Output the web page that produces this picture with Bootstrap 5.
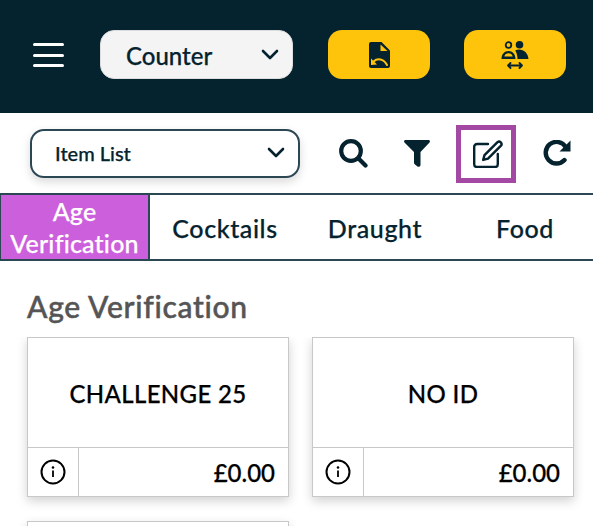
<!DOCTYPE html>
<html lang="en">

<head>
  <meta charset="UTF-8">
  <meta name="viewport" content="width=device-width, initial-scale=1.0">
  <title>Till</title>
  <link href="https://cdn.jsdelivr.net/npm/bootstrap@5.3.0/dist/css/bootstrap.min.css" rel="stylesheet">
  <style>
    html, body {
      height: 526px;
      overflow: hidden;
    }

    body {
      font-family: Lato, "Noto Sans", sans-serif;
      color: #05222f;
      background: #fff;
    }

    .top-bar {
      height: 113px;
      background: #05222f;
      padding: 30px 27px 0 33px;
    }

    .burger {
      width: 31px;
      height: 24px;
      margin-top: 13px;
      margin-right: 36px;
      padding: 0;
      background: none;
      border: 0;
    }

    .burger span {
      height: 3px;
      background: #fff;
      border-radius: 2px;
    }

    .pick {
      font-family: Lato, sans-serif;
      font-weight: 500;
      -webkit-text-stroke: .25px #05222f;
      color: #05222f;
      background-image: url("data:image/svg+xml,%3csvg xmlns='http://www.w3.org/2000/svg' viewBox='0 0 18 12'%3e%3cpath fill='none' stroke='%2305222f' stroke-width='2.6' stroke-linecap='round' stroke-linejoin='round' d='M2 2l7 7 7-7'/%3e%3c/svg%3e");
      background-size: 18px 12px;
    }

    .pick-counter {
      width: 193px;
      height: 49px;
      font-size: 24px;
      padding: 2px 0 0 25px;
      background-color: #f4f4f4;
      background-position: right 13px center;
      border: 1px solid #ddd;
      border-radius: 14px;
      margin-right: 35px;
    }

    .gold-btn {
      width: 102px;
      height: 49px;
      padding: 0;
      background: #fec40c;
      border: 0;
      border-radius: 14px;
    }

    .tool-row {
      height: 80px;
      padding-left: 30px;
    }

    .pick-list {
      width: 270px;
      height: 49px;
      font-size: 20px;
      padding: 0 0 0 23px;
      background-position: right 13px center;
      border: 2px solid #2c4754;
      border-radius: 14px;
      box-shadow: 0 4px 10px rgba(0, 0, 0, .15);
      flex: none;
    }

    .tool-btn {
      padding: 0;
      background: none;
      border: 0;
      line-height: 0;
      flex: none;
    }

    .tool-search {
      margin-left: 39px;
    }

    .tool-filter {
      margin-left: 36px;
    }

    .edit-box {
      width: 60px;
      height: 58px;
      margin-left: 26px;
      margin-top: 2px;
      border: 5px solid #a349a4;
    }

    .edit-box svg {
      margin-left: 3px;
    }

    .tool-redo {
      margin-left: 27px;
    }

    .tab-row {
      height: 68px;
      border-top: 2px solid #2c4754;
      border-bottom: 2px solid #2c4754;
    }

    .tab-item {
      width: 150px;
      flex: none;
      padding-top: 2px;
      font-size: 25px;
      font-weight: 500;
      -webkit-text-stroke: .25px currentColor;
      line-height: 32px;
      letter-spacing: .6px;
      text-align: center;
    }

    .tab-on {
      width: 150px;
      padding-top: 0;
      color: #fff;
      background: #cc5fdc;
      border-left: 1px solid #2c4754;
      border-right: 2px solid #2c4754;
      letter-spacing: .2px;
    }

    .group-title {
      margin: 28px 0 0;
      padding-left: 27px;
      height: 48px;
      font-size: 30px;
      font-weight: 500;
      -webkit-text-stroke: .5px #555;
      letter-spacing: .7px;
      line-height: 34px;
      color: #555;
    }

    .tile-grid {
      height: 189px;
      overflow: hidden;
      padding-left: 27px;
      padding-right: 10px;
      display: grid;
      grid-template-columns: 262px 262px;
      grid-auto-rows: 160px;
      column-gap: 23px;
      row-gap: 24px;
    }

    .tile {
      background: #fff;
      border: 1px solid #c8c8c8;
      box-shadow: 0 4px 10px rgba(0, 0, 0, .18);
      color: #000;
    }

    .tile-name {
      height: 110px;
      padding-top: 2px;
      font-size: 24px;
      font-weight: 500;
      -webkit-text-stroke: .25px #000;
      letter-spacing: .35px;
      border-bottom: 1px solid #c8c8c8;
    }

    .tile-foot {
      height: 48px;
    }

    .tile-info {
      width: 51px;
      border-right: 1px solid #c8c8c8;
    }

    .tile-price {
      font-size: 24px;
      font-weight: 500;
      -webkit-text-stroke: .25px #000;
      padding-right: 13px;
      padding-top: 1px;
    }
  </style>
</head>

<body>
  <div class="top-bar d-flex align-items-start">
    <button class="burger d-flex flex-column justify-content-between" aria-label="Menu">
      <span class="d-block w-100"></span>
      <span class="d-block w-100"></span>
      <span class="d-block w-100"></span>
    </button>
    <select class="form-select pick pick-counter">
      <option>Counter</option>
    </select>
    <button class="gold-btn d-flex align-items-center justify-content-center me-auto" aria-label="Refund">
      <svg width="21" height="26" viewBox="0 0 21 26">
        <path fill="#05222f" d="M2 0h10.500L21 8.500V24a2 2 0 0 1-2 2H2a2 2 0 0 1-2-2V2a2 2 0 0 1 2-2z" />
        <path fill="#fec40c" d="M11.500 2.500l7 6.500h-7z" />
        <path fill="#fec40c" d="M2 16.500v6.500l6-.5z" />
        <path fill="none" stroke="#fec40c" stroke-width="2" stroke-linecap="round" d="M4.500 19.500c4-3.500 10-3 13.500 3.500" />
      </svg>
    </button>
    <button class="gold-btn d-flex align-items-center justify-content-center" aria-label="Transfer">
      <svg width="28" height="28" viewBox="0 0 28 28">
        <circle cx="7.500" cy="4" r="2.800" fill="none" stroke="#05222f" stroke-width="1.800" />
        <circle cx="18.500" cy="3.800" r="3.800" fill="#05222f" />
        <path fill="#05222f" fill-rule="evenodd" d="M.5 18c0-5 3-8 7-8s7 3 7 8zM3.300 15.500h8.400c-.6-2-2.200-3.200-4.200-3.200s-3.600 1.200-4.200 3.200z" />
        <path fill="#05222f" d="M14.200 9.500c1.200-.6 2.500-1 3.800-1 5 0 9 3.800 9.500 9.500h-11c-.1-3.300-.8-6.300-2.300-8.500z" />
        <path fill="none" stroke="#05222f" stroke-width="1.800" stroke-linecap="round" stroke-linejoin="round" d="M7 24.500h14M9.500 22l-2.500 2.500L9.500 27M18.500 22l2.500 2.500L18.500 27" />
      </svg>
    </button>
  </div>

  <div class="tool-row d-flex align-items-center">
    <select class="form-select pick pick-list">
      <option>Item List</option>
    </select>
    <button class="tool-btn tool-search" aria-label="Search">
      <svg width="29" height="29" viewBox="0 0 29 29">
        <circle cx="12" cy="12" r="9.800" fill="none" stroke="#05222f" stroke-width="4.200" />
        <path stroke="#05222f" stroke-width="4.200" stroke-linecap="round" d="M19.500 19.500l7 7" />
      </svg>
    </button>
    <button class="tool-btn tool-filter" aria-label="Filter">
      <svg width="26" height="27" viewBox="0 0 26 27">
        <path fill="#05222f" d="M1.500 0h23c1.300 0 1.900 1.500 1 2.400L16.500 12v13c0 1.500-1.800 2.400-3 1.500l-2.500-2c-.6-.5-1-1.100-1-1.800V12L.5 2.400C-.4 1.500.2 0 1.500 0z" />
      </svg>
    </button>
    <button class="tool-btn edit-box d-flex align-items-center justify-content-center" aria-label="Edit">
      <svg width="30" height="28" viewBox="0 0 30 28">
        <path fill="none" stroke="#05222f" stroke-width="2.400" stroke-linecap="round" stroke-linejoin="round" d="M15 4H4a2.800 2.800 0 0 0-2.800 2.800v17.400A2.800 2.800 0 0 0 4 27h18a2.800 2.800 0 0 0 2.800-2.800V14" />
        <path fill="none" stroke="#05222f" stroke-width="2.400" stroke-linejoin="round" d="M24.500 2.200a2.500 2.500 0 0 1 3.500 3.500L15 18.600l-4.800 1.300 1.300-4.800z" />
      </svg>
    </button>
    <button class="tool-btn tool-redo" aria-label="Refresh">
      <svg width="28" height="26" viewBox="0 0 28 26">
        <path fill="none" stroke="#05222f" stroke-width="4.400" stroke-linecap="round" d="M21.500 20a10.800 10.800 0 1 1 1.200-13" />
        <path fill="#05222f" d="M27.500 0.500V11.500H16.500z" />
      </svg>
    </button>
  </div>

  <div class="tab-row d-flex">
    <div class="tab-item tab-on">Age Verification</div>
    <div class="tab-item d-flex align-items-center justify-content-center">Cocktails</div>
    <div class="tab-item d-flex align-items-center justify-content-center">Draught</div>
    <div class="tab-item d-flex align-items-center justify-content-center">Food</div>
  </div>

  <h2 class="group-title">Age Verification</h2>
  <div class="tile-grid">
    <div class="tile">
      <div class="tile-name d-flex align-items-center justify-content-center">CHALLENGE 25</div>
      <div class="tile-foot d-flex">
        <div class="tile-info d-flex align-items-center justify-content-center">
          <svg width="26" height="26" viewBox="0 0 26 26"><circle cx="13" cy="13" r="11.500" fill="none" stroke="#000" stroke-width="2" /><circle cx="13" cy="8.500" r="1.300" /><path d="M12.100 11.500h1.800V18h-1.800z" /></svg>
        </div>
        <div class="tile-price flex-grow-1 d-flex align-items-center justify-content-end">£0.00</div>
      </div>
    </div>
    <div class="tile">
      <div class="tile-name d-flex align-items-center justify-content-center">NO ID</div>
      <div class="tile-foot d-flex">
        <div class="tile-info d-flex align-items-center justify-content-center">
          <svg width="26" height="26" viewBox="0 0 26 26"><circle cx="13" cy="13" r="11.500" fill="none" stroke="#000" stroke-width="2" /><circle cx="13" cy="8.500" r="1.300" /><path d="M12.100 11.500h1.800V18h-1.800z" /></svg>
        </div>
        <div class="tile-price flex-grow-1 d-flex align-items-center justify-content-end">£0.00</div>
      </div>
    </div>
    <div class="tile"></div>
  </div>

  <script src="https://cdn.jsdelivr.net/npm/bootstrap@5.3.0/dist/js/bootstrap.bundle.min.js"></script>
</body>

</html>
